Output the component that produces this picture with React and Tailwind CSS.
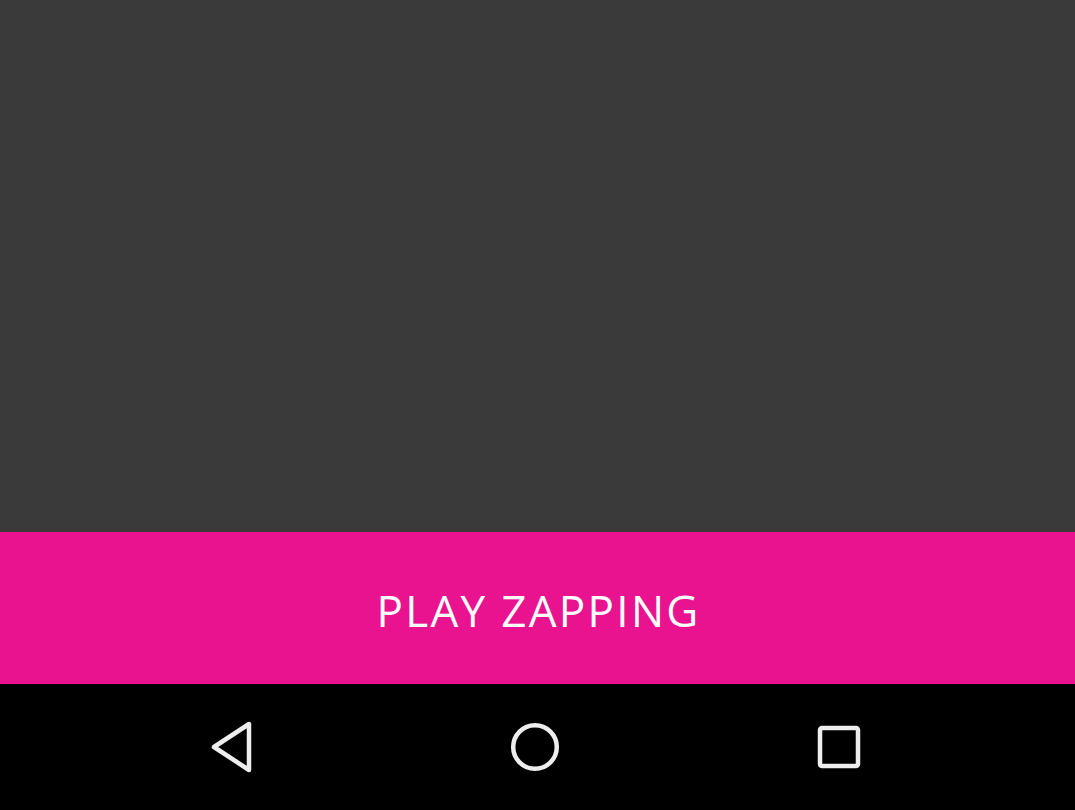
export default function App() {
  return (
    <div className="w-[1075px] h-[810px] flex flex-col bg-black" style={{ fontFamily: '"Open Sans", sans-serif' }}>
      <div className="h-[532px] bg-[#3a3a3a]" />
      <button className="h-[152px] bg-[#e9128f] flex items-center justify-center text-white text-[44px] leading-none tracking-[2.3px]">
        <span className="mt-[3px] ml-[2px]">PLAY ZAPPING</span>
      </button>
      <div className="h-[126px] bg-black flex items-center pl-[79px]">
        <div className="w-[304px] flex justify-center">
          <svg width="48" height="52" viewBox="0 0 48 52">
            <path d="M42 3 L42 49 L7 26 Z" fill="none" stroke="#eeeeee" strokeWidth="4.5" strokeLinejoin="round" />
          </svg>
        </div>
        <div className="w-[304px] flex justify-center">
          <svg width="52" height="52" viewBox="0 0 52 52">
            <circle cx="26" cy="26" r="21.8" fill="none" stroke="#eeeeee" strokeWidth="4.5" />
          </svg>
        </div>
        <div className="w-[304px] flex justify-center">
          <svg width="46" height="46" viewBox="0 0 46 46">
            <rect x="4" y="4" width="38" height="38" rx="2" fill="none" stroke="#eeeeee" strokeWidth="4.5" />
          </svg>
        </div>
      </div>
    </div>
  );
}
